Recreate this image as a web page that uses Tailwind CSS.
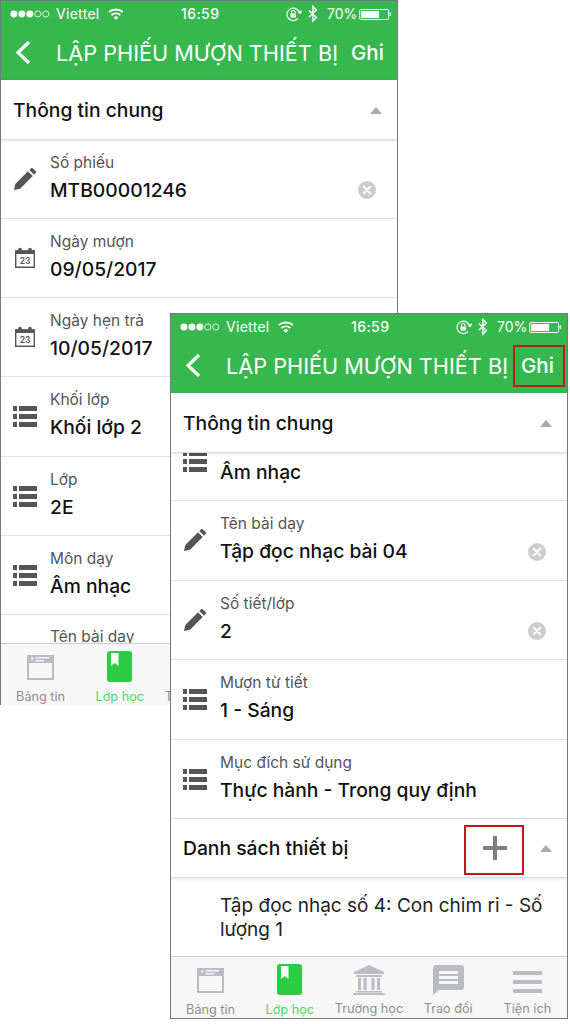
<!DOCTYPE html>
<html lang="vi">
<head>
<meta charset="utf-8">
<script src="https://cdn.jsdelivr.net/npm/@tailwindcss/browser@4"></script>
</head>
<body class="bg-white font-['Inter','Noto_Sans',sans-serif]">
<svg width="0" height="0" class="absolute">
  <defs>
    <symbol id="pen" viewBox="0 0 24 24"><path fill="#555" d="M1 23l1.400-6.400L15.600 3.400l5 5L7.400 21.600zM17 2l1.700-1.600c.6-.6 1.500-.6 2.100 0l2.800 2.800c.6.6.6 1.500 0 2.100L22 7z"/></symbol>
    <symbol id="cal" viewBox="0 0 22 22"><path fill="none" stroke="#555" stroke-width="1.400" d="M1.700 4h18.600v16.300H1.700z"/><path fill="#555" d="M1 3.500h20v3.500H1z"/><circle cx="6" cy="2.500" r="1.800" fill="#555"/><circle cx="16" cy="2.500" r="1.800" fill="#555"/><text x="11" y="17" text-anchor="middle" font-size="8.500" font-weight="600" fill="#555" font-family="Inter">23</text></symbol>
    <symbol id="list" viewBox="0 0 24 21"><path fill="#555" d="M0 0h4v5H0zM6 0h18v5H6zM0 8h4v5H0zM6 8h18v5H6zM0 16h4v5H0zM6 16h18v5H6z"/></symbol>
    <symbol id="clear" viewBox="0 0 18 18"><circle cx="9" cy="9" r="9" fill="#cdcdcd"/><path stroke="#fff" stroke-width="2" stroke-linecap="round" d="M5.800 5.800l6.400 6.400M12.200 5.800l-6.400 6.400"/></symbol>
    <symbol id="status" viewBox="0 0 398 25">
      <g fill="#fff"><circle cx="13" cy="13" r="3.500"/><circle cx="21" cy="13" r="3.500"/><circle cx="29" cy="13" r="3.500"/></g>
      <g fill="none" stroke="#fff" stroke-width=".8"><circle cx="37" cy="13" r="3.100"/><circle cx="45" cy="13" r="3.100"/></g>
      <g fill="none" stroke="#fff" stroke-width="1.800"><path d="M108.500 11a11 11 0 0 1 14 0"/><path d="M111 14a7 7 0 0 1 9 0"/></g><path fill="#fff" d="M115.500 19l-2.500-2.800a4 4 0 0 1 5 0z"/>
      <g fill="none" stroke="#fff" stroke-width="1.200"><path d="M300 13a6.300 6.300 0 1 0-1.500 4.500"/></g><path fill="#fff" d="M298 10.500l3.500 2.500 1-3.500zM291 12.500h5.500v4H291z"/><path fill="none" stroke="#fff" d="M292 12.500v-1.500a1.700 1.700 0 0 1 3.500 0v1.500"/>
      <path fill="none" stroke="#fff" stroke-width="1.400" d="M309.500 9.500l7.500 7-3.500 3.500v-14.500l3.500 3.500-7.500 7"/>
      <path fill="none" stroke="#fff" d="M361.500 8.500h27a1 1 0 0 1 1 1v8a1 1 0 0 1-1 1h-27a1 1 0 0 1-1-1v-8a1 1 0 0 1 1-1z"/><path fill="#fff" d="M362 10h18v7h-18zM390.500 11.500h1.500v3.500h-1.500z"/>
    </symbol>
    <symbol id="t-news" viewBox="0 0 27 25"><path fill="#b9bcc2" fill-rule="evenodd" d="M0 0h27v25H0zM2 8v15h23V8zM4 2.500v2h2.500v-2zM8.500 2v1.500H22V2zM8.500 5v1.500H17V5z"/></symbol>
    <symbol id="t-book" viewBox="0 0 25 31"><rect width="25" height="31" rx="3" fill="#29cc42"/><path fill="#fff" d="M4 2h7.500v13l-3.750-3L4 15z"/></symbol>
    <symbol id="t-school" viewBox="0 0 32 30"><path fill="#b9bcc2" d="M16 0l15 7v2H1V7zM3 10h26v2H3zM5 13h3v12H5zM10.500 13h3v12h-3zM18.500 13h3v12h-3zM24 13h3v12h-3zM3 26h26v1.500H3zM0 28h32v2H0z"/></symbol>
    <symbol id="t-chat" viewBox="0 0 31 30"><path fill="#b9bcc2" fill-rule="evenodd" d="M3 0h25a3 3 0 0 1 3 3v19a3 3 0 0 1-3 3H6l-6 5V3a3 3 0 0 1 3-3zM6 6v3h19V6zM6 11v3h19v-3zM6 16v3h19v-3z"/></symbol>
    <symbol id="t-menu" viewBox="0 0 29 22"><path fill="#b9bcc2" d="M0 0h29v4H0zM0 9h29v4H0zM0 18h29v4H0z"/></symbol>
  </defs>
</svg>

<!-- Phone 1 -->
<section class="absolute left-0 top-0 w-[398px] h-[705px] flex flex-col border-x border-t border-[#777] bg-white overflow-hidden">
  <header class="h-[79px] shrink-0 bg-[#37b84e] text-white relative">
    <svg class="w-[396px] h-[25px] block"><use href="#status"/></svg>
    <span class="absolute left-[55px] top-[3px] text-[14px] tracking-[.3px] leading-5">Viettel</span>
    <span class="absolute left-[180px] top-[3px] text-[14px] font-medium tracking-[.4px] leading-5">16:59</span>
    <span class="absolute left-[326px] top-[3px] text-[14px] leading-5">70%</span>
    <div class="h-[54px] flex items-center">
      <svg class="w-[16px] h-[25px] ml-[14px] -mt-[1px]" viewBox="0 0 16 25"><path d="M14 2L3 12.500 14 23" fill="none" stroke="#fff" stroke-width="3.200"/></svg>
      <span class="ml-[25px] text-[21.700px] whitespace-nowrap w-[295px]">LẬP PHIẾU MƯỢN THIẾT BỊ</span>
      <span class="text-[20.500px] font-medium">Ghi</span>
    </div>
  </header>
  <div class="h-[60px] shrink-0 flex items-center justify-between pl-[12px] pr-[13px] pt-[1px] border-b border-[#ddd] shadow-[0_1px_3px_rgba(0,0,0,.12)] relative">
    <span class="text-[19.300px] font-medium text-[#111]">Thông tin chung</span>
    <span class="w-0 h-0 mr-[2px] border-x-[6px] border-x-transparent border-b-[7px] border-b-[#aaa]"></span>
  </div>
  <div class="flex-1 min-h-0 overflow-hidden">
    <div class="h-[79px] flex items-center border-b border-[#e2e2e2] pl-[12px] pr-[21px]">
      <svg class="w-[23px] h-[23px] shrink-0"><use href="#pen"/></svg>
      <div class="ml-[14px] flex-1 -mt-[4px]"><p class="text-[15.500px] leading-5 text-[#555] mb-[5px]">Số phiếu</p><p class="text-[19.300px] leading-6 font-medium text-[#111]">MTB00001246</p></div>
      <svg class="w-[18px] h-[18px] mt-[22px]"><use href="#clear"/></svg>
    </div>
    <div class="h-[79px] flex items-center border-b border-[#e2e2e2] pl-[13px]">
      <svg class="w-[22px] h-[22px] shrink-0"><use href="#cal"/></svg>
      <div class="ml-[14px] -mt-[4px]"><p class="text-[15.500px] leading-5 text-[#555] mb-[5px]">Ngày mượn</p><p class="text-[19.300px] leading-6 font-medium text-[#111]">09/05/2017</p></div>
    </div>
    <div class="h-[79px] flex items-center border-b border-[#e2e2e2] pl-[13px]">
      <svg class="w-[22px] h-[22px] shrink-0"><use href="#cal"/></svg>
      <div class="ml-[14px] -mt-[4px]"><p class="text-[15.500px] leading-5 text-[#555] mb-[5px]">Ngày hẹn trả</p><p class="text-[19.300px] leading-6 font-medium text-[#111]">10/05/2017</p></div>
    </div>
    <div class="h-[80px] flex items-center border-b border-[#e2e2e2] pl-[12px]">
      <svg class="w-[24px] h-[21px] shrink-0"><use href="#list"/></svg>
      <div class="ml-[13px] -mt-[4px]"><p class="text-[15.500px] leading-5 text-[#555] mb-[5px]">Khối lớp</p><p class="text-[19.300px] leading-6 font-medium text-[#111]">Khối lớp 2</p></div>
    </div>
    <div class="h-[79px] flex items-center border-b border-[#e2e2e2] pl-[12px]">
      <svg class="w-[24px] h-[21px] shrink-0"><use href="#list"/></svg>
      <div class="ml-[13px] -mt-[4px]"><p class="text-[15.500px] leading-5 text-[#555] mb-[5px]">Lớp</p><p class="text-[19.300px] leading-6 font-medium text-[#111]">2E</p></div>
    </div>
    <div class="h-[79px] flex items-center border-b border-[#e2e2e2] pl-[12px]">
      <svg class="w-[24px] h-[21px] shrink-0"><use href="#list"/></svg>
      <div class="ml-[13px] -mt-[4px]"><p class="text-[15.500px] leading-5 text-[#555] mb-[5px]">Môn dạy</p><p class="text-[19.300px] leading-6 font-medium text-[#111]">Âm nhạc</p></div>
    </div>
    <div class="h-[79px] flex pt-[12px] pl-[49px]"><p class="text-[15.500px] leading-5 text-[#555]">Tên bài dạy</p></div>
  </div>
  <nav class="h-[62px] shrink-0 grid grid-cols-5 bg-[#f7f7f7] border-t border-[#ccc] text-[12.700px] text-[#8e8e93]">
    <div class="flex flex-col items-center pt-[11px]"><svg class="w-[27px] h-[25px]"><use href="#t-news"/></svg><span class="mt-[9px] leading-4">Bảng tin</span></div>
    <div class="flex flex-col items-center pt-[7px] text-[#4cd964]"><svg class="w-[25px] h-[31px]"><use href="#t-book"/></svg><span class="mt-[7px] leading-4">Lớp học</span></div>
    <div class="flex flex-col items-center pt-[6px]"><svg class="w-[32px] h-[30px]"><use href="#t-school"/></svg><span class="mt-[9px] leading-4 whitespace-nowrap">Trường học</span></div>
    <div></div><div></div>
  </nav>
</section>

<!-- Phone 2 -->
<section class="absolute left-[170px] top-[313px] w-[398px] h-[706px] flex flex-col border border-[#777] bg-white overflow-hidden">
  <header class="h-[79px] shrink-0 bg-[#37b84e] text-white relative">
    <svg class="w-[396px] h-[25px] block"><use href="#status"/></svg>
    <span class="absolute left-[55px] top-[3px] text-[14px] tracking-[.3px] leading-5">Viettel</span>
    <span class="absolute left-[180px] top-[3px] text-[14px] font-medium tracking-[.4px] leading-5">16:59</span>
    <span class="absolute left-[326px] top-[3px] text-[14px] leading-5">70%</span>
    <div class="h-[54px] flex items-center">
      <svg class="w-[16px] h-[25px] ml-[14px] -mt-[1px]" viewBox="0 0 16 25"><path d="M14 2L3 12.500 14 23" fill="none" stroke="#fff" stroke-width="3.200"/></svg>
      <span class="ml-[25px] text-[21.700px] whitespace-nowrap w-[295px]">LẬP PHIẾU MƯỢN THIẾT BỊ</span>
      <span class="text-[20.500px] font-medium">Ghi</span>
    </div>
    <div class="absolute left-[342px] top-[31px] w-[52px] h-[42px] border-2 border-[#c8161d]"></div>
  </header>
  <div class="h-[60px] shrink-0 flex items-center justify-between pl-[12px] pr-[13px] pt-[1px] border-b border-[#ddd] shadow-[0_1px_3px_rgba(0,0,0,.12)] relative z-10 bg-white">
    <span class="text-[19.300px] font-medium text-[#111]">Thông tin chung</span>
    <span class="w-0 h-0 mr-[2px] border-x-[6px] border-x-transparent border-b-[7px] border-b-[#aaa]"></span>
  </div>
  <div class="flex-1 min-h-0 overflow-hidden">
    <div class="-mt-[31px] h-[79px] flex items-center border-b border-[#e2e2e2] pl-[12px]">
      <svg class="w-[24px] h-[21px] shrink-0"><use href="#list"/></svg>
      <div class="ml-[13px] -mt-[4px]"><p class="text-[15.500px] leading-5 text-[#555] mb-[5px] invisible">Môn dạy</p><p class="text-[19.300px] leading-6 font-medium text-[#111]">Âm nhạc</p></div>
    </div>
    <div class="h-[80px] flex items-center border-b border-[#e2e2e2] pl-[12px] pr-[21px]">
      <svg class="w-[23px] h-[23px] shrink-0"><use href="#pen"/></svg>
      <div class="ml-[14px] flex-1 -mt-[4px]"><p class="text-[15.500px] leading-5 text-[#555] mb-[5px]">Tên bài dạy</p><p class="text-[19.300px] leading-6 font-medium text-[#111]">Tập đọc nhạc bài 04</p></div>
      <svg class="w-[18px] h-[18px] mt-[22px]"><use href="#clear"/></svg>
    </div>
    <div class="h-[79px] flex items-center border-b border-[#e2e2e2] pl-[12px] pr-[21px]">
      <svg class="w-[23px] h-[23px] shrink-0"><use href="#pen"/></svg>
      <div class="ml-[14px] flex-1 -mt-[4px]"><p class="text-[15.500px] leading-5 text-[#555] mb-[5px]">Số tiết/lớp</p><p class="text-[19.300px] leading-6 font-medium text-[#111]">2</p></div>
      <svg class="w-[18px] h-[18px] mt-[22px]"><use href="#clear"/></svg>
    </div>
    <div class="h-[80px] flex items-center border-b border-[#e2e2e2] pl-[12px]">
      <svg class="w-[24px] h-[21px] shrink-0"><use href="#list"/></svg>
      <div class="ml-[13px] -mt-[4px]"><p class="text-[15.500px] leading-5 text-[#555] mb-[5px]">Mượn từ tiết</p><p class="text-[19.300px] leading-6 font-medium text-[#111]">1 - Sáng</p></div>
    </div>
    <div class="h-[78px] flex items-center pl-[12px]">
      <svg class="w-[24px] h-[21px] shrink-0"><use href="#list"/></svg>
      <div class="ml-[13px] -mt-[4px]"><p class="text-[15.500px] leading-5 text-[#555] mb-[5px]">Mục đích sử dụng</p><p class="text-[19.300px] leading-6 font-medium text-[#111]">Thực hành - Trong quy định</p></div>
    </div>
    <div class="h-[60px] flex items-center pl-[12px] pr-[13px] border-y border-[#ddd] shadow-[0_1px_3px_rgba(0,0,0,.12)] relative">
      <span class="text-[19.300px] font-medium text-[#111] flex-1">Danh sách thiết bị</span>
      <svg class="w-[24px] h-[24px] mr-[33px]" viewBox="0 0 24 24"><path fill="#808080" d="M10 0h4v10h10v4H14v10h-4V14H0v-4h10z"/></svg>
      <span class="w-0 h-0 mr-[2px] border-x-[6px] border-x-transparent border-b-[7px] border-b-[#aaa]"></span>
      <div class="absolute left-[293px] top-[6px] w-[60px] h-[50px] border-2 border-[#c8161d]"></div>
    </div>
    <p class="pl-[49px] pr-[16px] pt-[16px] text-[19px] leading-[24px] text-[#222]">Tập đọc nhạc số 4: Con chim ri - Số lượng 1</p>
  </div>
  <nav class="h-[62px] shrink-0 grid grid-cols-5 bg-[#f7f7f7] border-t border-[#ccc] text-[12.700px] text-[#8e8e93]">
    <div class="flex flex-col items-center pt-[11px]"><svg class="w-[27px] h-[25px]"><use href="#t-news"/></svg><span class="mt-[9px] leading-4">Bảng tin</span></div>
    <div class="flex flex-col items-center pt-[7px] text-[#4cd964]"><svg class="w-[25px] h-[31px]"><use href="#t-book"/></svg><span class="mt-[7px] leading-4">Lớp học</span></div>
    <div class="flex flex-col items-center pt-[8px]"><svg class="w-[32px] h-[30px]"><use href="#t-school"/></svg><span class="mt-[6px] leading-4 whitespace-nowrap">Trường học</span></div>
    <div class="flex flex-col items-center pt-[8px]"><svg class="w-[31px] h-[30px]"><use href="#t-chat"/></svg><span class="mt-[6px] leading-4 whitespace-nowrap">Trao đổi</span></div>
    <div class="flex flex-col items-center pt-[14px]"><svg class="w-[29px] h-[22px]"><use href="#t-menu"/></svg><span class="mt-[8px] leading-4 whitespace-nowrap">Tiện ích</span></div>
  </nav>
</section>
</body>
</html>
